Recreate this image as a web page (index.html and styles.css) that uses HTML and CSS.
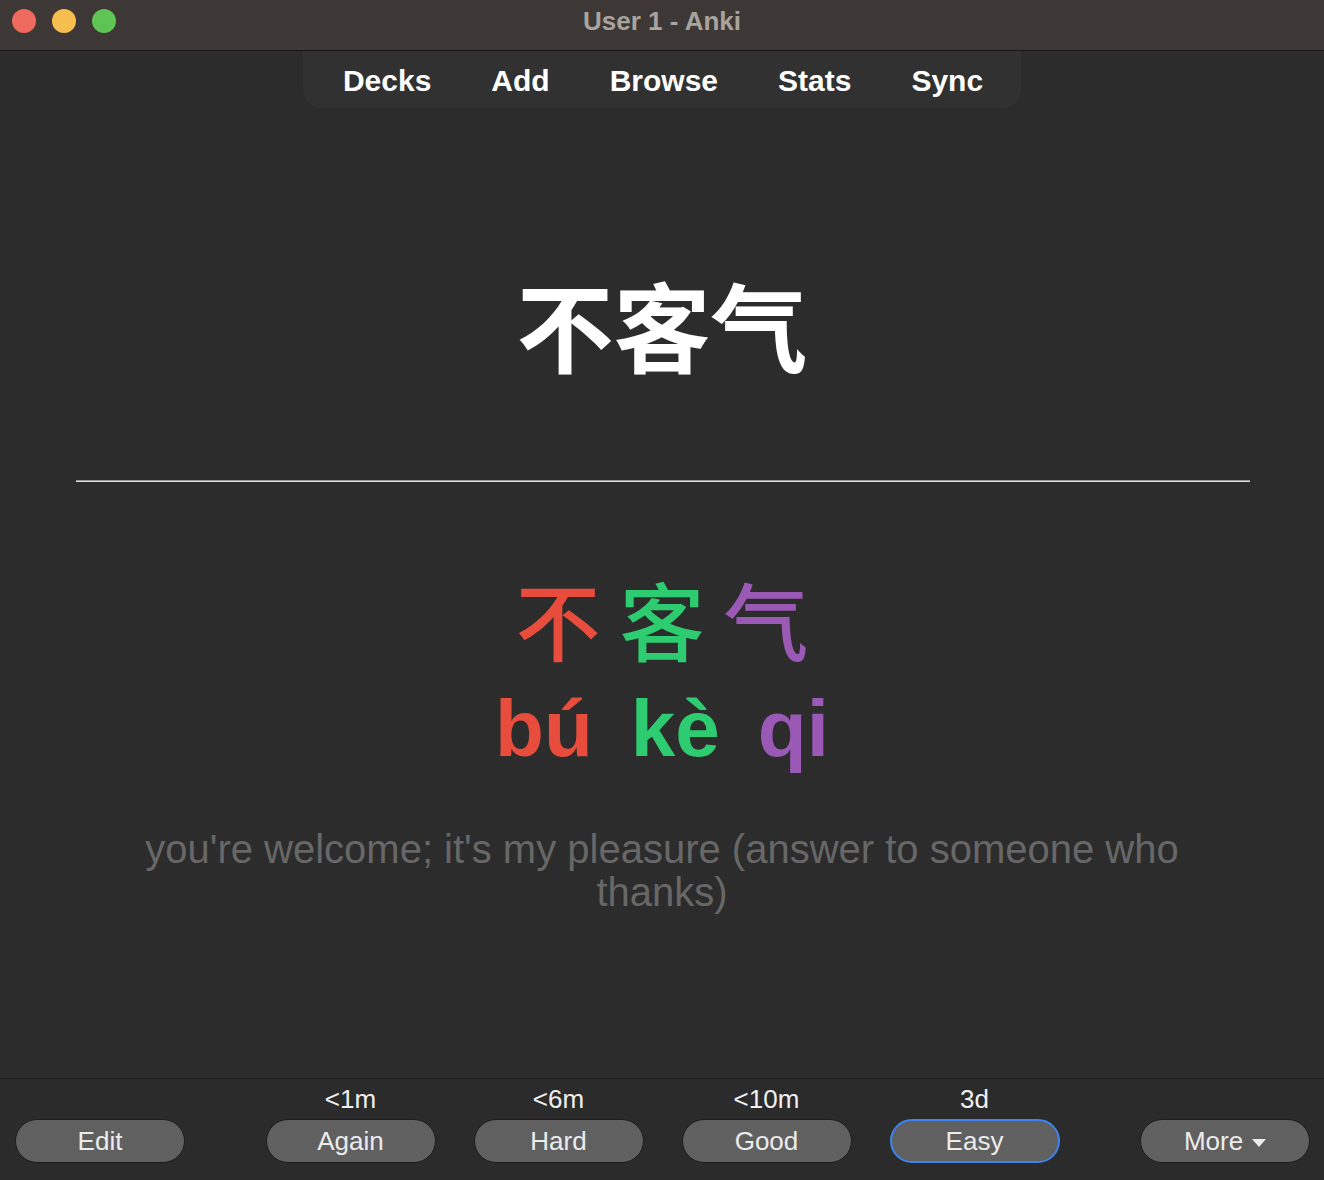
FILE: index.html
```html
<!DOCTYPE html>
<html lang="zh">
<head>
<meta charset="utf-8">
<title>User 1 - Anki</title>
<link rel="stylesheet" href="styles.css">
</head>
<body>
<div class="window">
  <header class="titlebar">
    <div class="lights">
      <span class="light red"></span>
      <span class="light yellow"></span>
      <span class="light green"></span>
    </div>
    <div class="title">User 1 - Anki</div>
    <div></div>
  </header>
  <nav class="toolbar">
    <a class="tool">Decks</a>
    <a class="tool">Add</a>
    <a class="tool">Browse</a>
    <a class="tool">Stats</a>
    <a class="tool">Sync</a>
  </nav>
  <main class="card">
    <div class="front">不客气</div>
    <hr class="answer-rule">
    <div class="hanzi">
      <span class="tone2">不</span>
      <span class="tone4">客</span>
      <span class="tone5">气</span>
    </div>
    <div class="pinyin">
      <span class="tone2">bú</span>
      <span class="tone4">kè</span>
      <span class="tone5">qi</span>
    </div>
    <div class="definition">you're welcome; it's my pleasure (answer to someone who thanks)</div>
  </main>
  <footer class="bottombar">
    <div class="side left">
      <button class="btn">Edit</button>
    </div>
    <div class="answers">
      <div class="answer">
        <div class="due">&lt;1m</div>
        <button class="btn">Again</button>
      </div>
      <div class="answer">
        <div class="due">&lt;6m</div>
        <button class="btn">Hard</button>
      </div>
      <div class="answer">
        <div class="due">&lt;10m</div>
        <button class="btn">Good</button>
      </div>
      <div class="answer">
        <div class="due">3d</div>
        <button class="btn focus">Easy</button>
      </div>
    </div>
    <div class="side right">
      <button class="btn more">More <span class="caret"></span></button>
    </div>
  </footer>
</div>
</body>
</html>
```

FILE: styles.css
```css
html, body {
  margin: 0;
  padding: 0;
  background: #2c2c2c;
}

body {
  font-family: "Liberation Sans", Arial, "Noto Sans CJK SC", sans-serif;
  color: #fff;
}

.window {
  width: 1324px;
  height: 1180px;
  display: flex;
  flex-direction: column;
  overflow: hidden;
}

/* Title bar */
.titlebar {
  height: 42px;
  padding-bottom: 8px;
  background: #3d3835;
  border-bottom: 1px solid #161616;
  display: grid;
  grid-template-columns: 1fr auto 1fr;
  align-items: center;
}

.lights {
  display: flex;
  gap: 16px;
  padding-left: 12px;
}

.light {
  width: 24px;
  height: 24px;
  border-radius: 50%;
  display: block;
}

.light.red { background: #ee6a5f; }
.light.yellow { background: #f5be4f; }
.light.green { background: #5ec454; }

.title {
  font-size: 26px;
  font-weight: bold;
  color: #a9a39e;
}

/* Toolbar */
.toolbar {
  align-self: center;
  display: flex;
  gap: 60px;
  height: 57px;
  align-items: center;
  padding: 0 38px 0 40px;
  background: #313131;
  border-radius: 0 0 18px 18px;
}

.tool {
  font-size: 30px;
  font-weight: bold;
  color: #fff;
  line-height: 1;
  padding-top: 2px;
}

/* Card */
.card {
  flex: 1;
  text-align: center;
  font-family: "Noto Sans CJK SC", sans-serif;
}

.front {
  margin-top: 166px;
  font-size: 97px;
  font-weight: bold;
  line-height: 1;
  color: #fff;
}

.answer-rule {
  margin: 109px 74px 0 76px;
  height: 0;
  border: 0;
  border-top: 1px solid #9a9a9a;
  border-bottom: 1px solid #e0e0e0;
}

.hanzi {
  margin-top: 93px;
  display: flex;
  justify-content: center;
  gap: 19px;
  font-size: 85px;
  line-height: 1;
  font-weight: 500;
}

.pinyin {
  margin-top: 29px;
  display: flex;
  justify-content: center;
  gap: 38px;
  font-family: "Liberation Sans", Arial, sans-serif;
  font-size: 80px;
  font-weight: bold;
  line-height: 1;
}

.tone2 { color: #e74c3c; }
.tone4 { color: #2ecc71; }
.tone5 { color: #9b59b6; }

.definition {
  margin: 59px auto 0;
  width: 1080px;
  font-family: "Liberation Sans", Arial, sans-serif;
  font-size: 40px;
  line-height: 43px;
  color: #676767;
}

/* Bottom bar */
.bottombar {
  height: 96px;
  padding: 5px 14px 0 15px;
  background: #2b2b2b;
  border-top: 1px solid #1f1f1f;
  display: flex;
  align-items: flex-start;
  justify-content: space-between;
}

.side {
  width: 170px;
  display: flex;
  padding-top: 35px;
}

.answers {
  display: flex;
  gap: 38px;
}

.answer {
  display: flex;
  flex-direction: column;
  align-items: center;
  gap: 5px;
}

.due {
  font-size: 26px;
  line-height: 30px;
  color: #f0f0f0;
}

.btn {
  width: 170px;
  height: 44px;
  box-sizing: border-box;
  border-radius: 22px;
  border: 1px solid #1c1c1c;
  background: #606060;
  color: #ececec;
  font-family: "Liberation Sans", Arial, sans-serif;
  font-size: 26px;
  line-height: 1;
  padding: 0;
  display: flex;
  align-items: center;
  justify-content: center;
}

.btn.focus {
  border: 2px solid #3d84f0;
}

.btn.more {
  gap: 9px;
}

.caret {
  width: 0;
  height: 0;
  border-left: 7px solid transparent;
  border-right: 7px solid transparent;
  border-top: 8px solid #ececec;
  margin-top: 3px;
}
```
